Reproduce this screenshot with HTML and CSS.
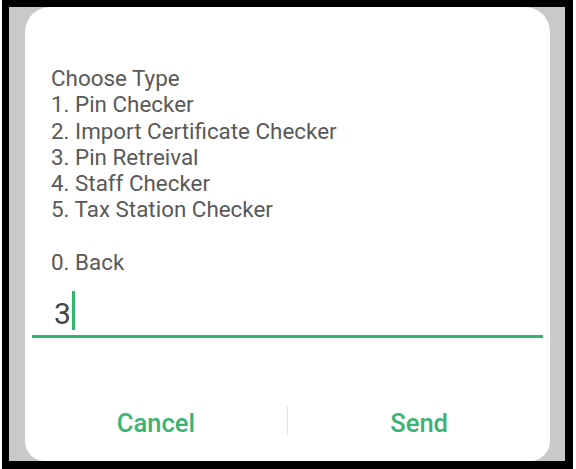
FILE: index.html
```html
<!DOCTYPE html>
<html>
<head>
<meta charset="utf-8">
<link rel="stylesheet" href="styles.css">
</head>
<body>
<div class="frame">
  <div class="screen">
    <div class="card">
      <div class="menu">
        <div>Choose Type</div>
        <div>1. Pin Checker</div>
        <div>2. Import Certificate Checker</div>
        <div>3. Pin Retreival</div>
        <div>4. Staff Checker</div>
        <div>5. Tax Station Checker</div>
        <div class="blank"></div>
        <div>0. Back</div>
      </div>
      <div class="input">
        <span class="value">3</span><span class="cursor"></span>
      </div>
      <div class="actions">
        <div class="btn">Cancel</div>
        <div class="divider"></div>
        <div class="btn">Send</div>
      </div>
    </div>
  </div>
</div>
</body>
</html>
```
FILE: styles.css
```css
html, body {
  margin: 0;
  padding: 0;
  background: #ffffff;
}
body {
  width: 576px;
  height: 469px;
  overflow: hidden;
  font-family: Roboto, "Liberation Sans", sans-serif;
}
.frame {
  margin-left: 2px;
  width: 571px;
  height: 469px;
  box-sizing: border-box;
  background: #000;
  padding: 7px 8px 8px 7px;
}
.screen {
  height: 454px;
  background: #c9c9c9;
  padding: 0 15px 0 16px;
  overflow: hidden;
}
.card {
  height: 454px;
  background: #fff;
  border-radius: 25px 25px 20px 20px;
  box-sizing: border-box;
  padding-top: 58px;
}
.menu {
  padding-left: 26px;
  font-size: 22.4px;
  line-height: 26.3px;
  color: #595959;
}
.blank {
  height: 26.3px;
}
.input {
  margin: 20px 7px 0 7px;
  height: 40px;
  border-bottom: 3px solid #33b571;
  padding-left: 22px;
  display: flex;
  align-items: flex-start;
}
.value {
  font-size: 30px;
  line-height: 36px;
  color: #444444;
  margin-top: 1px;
}
.cursor {
  width: 3px;
  height: 39px;
  background: #33b571;
  margin-top: -4px;
  margin-left: 1px;
}
.actions {
  margin-top: 70px;
  display: flex;
  align-items: flex-start;
  height: 30px;
}
.btn {
  flex: 1;
  text-align: center;
  font-size: 25.5px;
  font-weight: 500;
  line-height: 30px;
  color: #3bb375;
}
.divider {
  width: 1.5px;
  height: 29px;
  margin-top: -2px;
  background: #e2e2e2;
}
```
